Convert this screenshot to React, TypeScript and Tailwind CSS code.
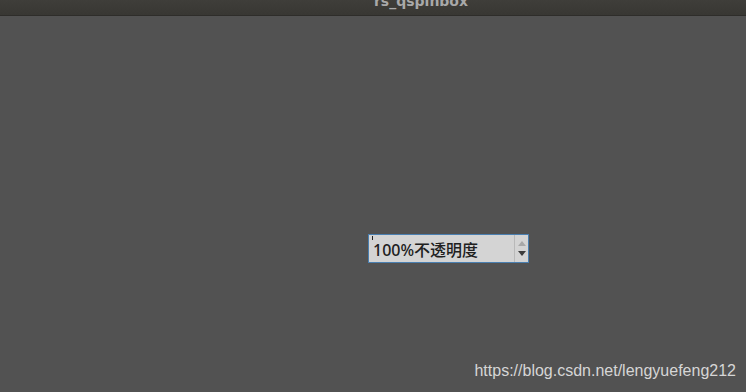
export default function App() {
  return (
    <div className="w-[746px] h-[392px] bg-[#525252] flex flex-col overflow-hidden font-['Liberation_Sans',sans-serif]">
      <div className="h-[16px] shrink-0 bg-gradient-to-b from-[#3f3e3a] to-[#383733] border-b border-[#2e2d2a] overflow-hidden flex justify-center">
        <span className="text-[14px] font-bold leading-[14px] -mt-[6px] ml-[96px] text-[#a9a9a9] font-['DejaVu_Sans',sans-serif]">rs_qspinbox</span>
      </div>

      <div className="flex-1 relative">
        <div className="absolute left-[368px] top-[218px] w-[161px] h-[29px] border border-[#4a7fb0] bg-[#d4d4d4] flex">
          <div className="flex-1 relative flex items-center pl-[4px]">
            <span className="absolute left-[3px] top-[1px] w-[1px] h-[4px] bg-[#222]"></span>
            <span className="text-[16px] font-medium text-[#202020] mt-[2px] font-['Noto_Sans','Noto_Sans_CJK_SC',sans-serif]">100%不透明度</span>
          </div>
          <div className="w-[14px] border-l border-[#b9b9b9] flex flex-col items-center justify-center gap-[5px]">
            <svg width="8" height="5" viewBox="0 0 8 5"><path d="M0 5 L4 0 L8 5 Z" fill="#a8a8a8" /></svg>
            <svg width="8" height="5" viewBox="0 0 8 5"><path d="M0 0 L8 0 L4 5 Z" fill="#3c3c3c" /></svg>
          </div>
        </div>
        <div className="absolute right-[10px] bottom-[9px] text-[16px] text-[#d6d6d6]">https://blog.csdn.net/lengyuefeng212</div>
      </div>
    </div>
  );
}
